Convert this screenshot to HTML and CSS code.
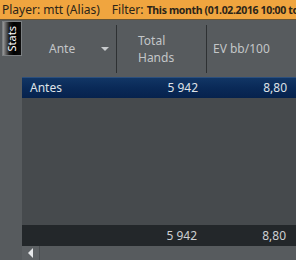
FILE: index.html
```html
<!DOCTYPE html>
<html>
<head>
<meta charset="utf-8">
<link rel="stylesheet" href="styles.css">
</head>
<body>
<div class="topbar"><span class="lbl">Player: mtt (Alias)</span><span class="gap"></span><span class="lbl">Filter:</span> <span class="val">This month (01.02.2016 10:00 to 29.02.2016 09:59)</span></div>
<div class="main">
  <div class="side">
    <div class="tab"><span class="tabtext">Stats</span></div>
  </div>
  <div class="grid">
    <div class="thead">
      <div class="th c1"><span class="ante">Ante</span><span class="arrow"></span></div>
      <div class="th c2"><span>Total<br>Hands</span></div>
      <div class="th c3"><span>EV bb/100</span></div>
    </div>
    <div class="rows">
      <div class="row sel">
        <div class="td c1">Antes</div>
        <div class="td c2 num">5 942</div>
        <div class="td c3 num">8,80</div>
      </div>
    </div>
    <div class="total">
      <div class="td c1"></div>
      <div class="td c2 num">5 942</div>
      <div class="td c3 num">8,80</div>
    </div>
    <div class="hscroll">
      <div class="sbtn"><span class="larrow"></span></div>
      <div class="track"></div>
    </div>
  </div>
</div>
</body>
</html>
```
FILE: styles.css
```css
html, body {
  margin: 0;
  padding: 0;
}
body {
  width: 296px;
  height: 260px;
  overflow: hidden;
  background: #565a5d;
  font-family: "Noto Sans", "Open Sans", sans-serif;
  font-size: 12px;
}
.topbar {
  height: 19px;
  line-height: 19px;
  background: #f0a53f;
  border-bottom: 1px solid #6a5532;
  color: #2b2418;
  padding-left: 2px;
  white-space: nowrap;
  overflow: hidden;
}
.topbar .val {
  font-weight: 700;
  font-size: 10.5px;
  letter-spacing: -0.35px;
}
.topbar .gap {
  display: inline-block;
  width: 12px;
}
.main {
  display: flex;
  height: 240px;
}
.side {
  width: 22px;
  background: #575b5e;
  padding-top: 1px;
  box-sizing: border-box;
}
.tab {
  margin-left: 2px;
  width: 18px;
  height: 33px;
  border: 1px solid #7b7f82;
  background: linear-gradient(to right, #9a9a9a 0%, #1a1a1a 35%, #000 60%, #0c0c0c 100%);
  display: flex;
  align-items: center;
  justify-content: center;
  overflow: hidden;
}
.tabtext {
  writing-mode: vertical-rl;
  transform: rotate(180deg);
  color: #ffffff;
  font-size: 11px;
  line-height: 12px;
}
.grid {
  flex: 1;
  display: flex;
  flex-direction: column;
}
.thead {
  height: 57px;
  display: flex;
  background: #575b5e;
  color: #c3c6c8;
}
.th {
  display: flex;
  align-items: center;
  position: relative;
  box-sizing: border-box;
}
.th.c1 {
  width: 95px;
  padding-left: 27px;
}
.th.c2 {
  width: 90px;
  padding-left: 21px;
  line-height: 17px;
}
.th.c3 {
  flex: 1;
  padding-left: 6px;
}
.th.c1::after, .th.c2::after {
  content: "";
  position: absolute;
  right: 0;
  top: 5px;
  bottom: 4px;
  width: 1px;
  background: #2e3133;
}
.arrow {
  margin-left: 26px;
  width: 0;
  height: 0;
  border-left: 4px solid transparent;
  border-right: 4px solid transparent;
  border-top: 4px solid #c8cbcd;
}
.rows {
  flex: 1;
  background: #464a4d;
}
.row, .total {
  display: flex;
  height: 21px;
  line-height: 21px;
}
.row.sel {
  background: linear-gradient(to bottom, #123766 0%, #0a2a58 50%, #06224d 100%);
  box-shadow: inset 0 1px 0 #2c4f7c;
  color: #dfe3e8;
}
.td {
  box-sizing: border-box;
  white-space: nowrap;
}
.td.c1 {
  width: 95px;
  padding-left: 8px;
}
.td.c2 {
  width: 90px;
}
.td.c3 {
  flex: 1;
}
.num {
  text-align: right;
  padding-right: 9px;
}
.total {
  background: #23272a;
  color: #cdd0d2;
}
.total .c2 {
  padding-right: 10px;
}
.total .c3 {
  padding-right: 10px;
}
.hscroll {
  height: 14px;
  display: flex;
  background: #575b5e;
}
.sbtn {
  width: 17px;
  background: #5d6164;
  border-right: 1px solid #4a4e51;
  display: flex;
  align-items: center;
  justify-content: center;
}
.larrow {
  width: 0;
  height: 0;
  border-top: 5px solid transparent;
  border-bottom: 5px solid transparent;
  border-right: 5px solid #e6e8ea;
}
.track {
  flex: 1;
  background: #575b5e;
}
```
